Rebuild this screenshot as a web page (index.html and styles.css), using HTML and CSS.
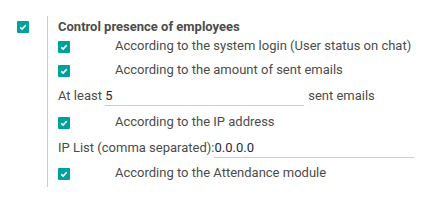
FILE: index.html
```html
<!DOCTYPE html>
<html>
<head>
<meta charset="utf-8">
<link rel="stylesheet" href="styles.css">
</head>
<body>
<div class="box">
  <div class="left">
    <span class="cb"><svg viewBox="0 0 12 12" width="12" height="12"><path d="M3.3 6.4 L5.1 8.1 L8.7 4.2" fill="none" stroke="#fff" stroke-width="1.6"/></svg></span>
  </div>
  <div class="right">
    <div class="title">Control presence of employees</div>
    <div class="row r2"><span class="cbcol"><span class="cb"><svg viewBox="0 0 12 12" width="12" height="12"><path d="M3.3 6.4 L5.1 8.1 L8.7 4.2" fill="none" stroke="#fff" stroke-width="1.6"/></svg></span></span><span>According to the system login (User status on chat)</span></div>
    <div class="row r3"><span class="cbcol"><span class="cb"><svg viewBox="0 0 12 12" width="12" height="12"><path d="M3.3 6.4 L5.1 8.1 L8.7 4.2" fill="none" stroke="#fff" stroke-width="1.6"/></svg></span></span><span>According to the amount of sent emails</span></div>
    <div class="row r4"><span>At least&nbsp;</span><span class="inp w199">5</span><span class="after">sent emails</span></div>
    <div class="row r5"><span class="cbcol"><span class="cb"><svg viewBox="0 0 12 12" width="12" height="12"><path d="M3.3 6.4 L5.1 8.1 L8.7 4.2" fill="none" stroke="#fff" stroke-width="1.6"/></svg></span></span><span>According to the IP address</span></div>
    <div class="row r6"><span>IP List (comma separated):</span><span class="inp w200">0.0.0.0</span></div>
    <div class="row r7"><span class="cbcol"><span class="cb"><svg viewBox="0 0 12 12" width="12" height="12"><path d="M3.3 6.4 L5.1 8.1 L8.7 4.2" fill="none" stroke="#fff" stroke-width="1.6"/></svg></span></span><span>According to the Attendance module</span></div>
  </div>
</div>
</body>
</html>
```
FILE: styles.css
```css
html, body {
  margin: 0;
  padding: 0;
  background: #fff;
}
body {
  font-family: Roboto, "Liberation Sans", sans-serif;
  font-size: 13px;
  color: #4c4c4c;
}
.box {
  display: flex;
  padding-top: 16px;
}
.left {
  width: 47px;
  flex: none;
  padding-left: 17px;
  padding-top: 5px;
  box-sizing: border-box;
}
.cb {
  display: block;
  width: 12px;
  height: 12px;
  background: #00a09d;
  border-radius: 1px;
}
.cb svg {
  display: block;
}
.right {
  border-left: 1px solid #ccc;
  padding-left: 10px;
  padding-bottom: 2px;
  width: 380px;
}
.title {
  font-weight: 700;
  height: 14px;
  line-height: 14px;
  margin-top: 4px;
}
.row {
  display: flex;
  align-items: center;
  white-space: nowrap;
}
.r2 { height: 23px; }
.r3 { height: 25px; }
.r4 { height: 26px; }
.r5 { height: 26px; }
.r6 { height: 26px; }
.r7 { height: 25px; }
.cbcol {
  width: 57px;
  flex: none;
  padding-top: 3px;
}
.inp {
  display: flex;
  align-items: center;
  box-sizing: border-box;
  height: 21px;
  border-bottom: 1px solid #ccc;
  color: #1f2a3a;
  margin-top: 1px;
}
.w199 { width: 199px; }
.w200 { width: 200px; }
.after {
  margin-left: 4px;
}
```
